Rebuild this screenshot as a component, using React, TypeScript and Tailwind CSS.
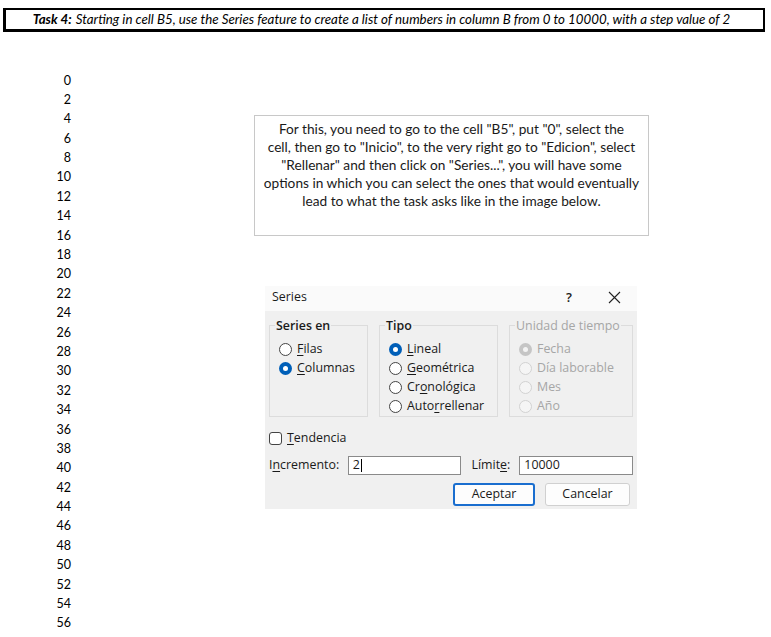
import React from 'react';

const numbers = Array.from({ length: 29 }, (_, i) => i * 2);

const noteLines = [
  'For this, you need to go to the cell "B5", put "0", select the',
  'cell, then go to "Inicio", to the very right go to "Edicion", select',
  '"Rellenar" and then click on "Series...", you will have some',
  'options in which you can select the ones that would eventually',
  'lead to what the task asks like in the image below.',
];

type RadioState = 'on' | 'off' | 'disabled-on' | 'disabled-off';

const Radio = ({ state }: { state: RadioState }) => {
  if (state === 'on') {
    return (
      <span className="w-[13px] h-[13px] rounded-full bg-[#005fb8] flex items-center justify-center shrink-0">
        <span className="w-[5px] h-[5px] rounded-full bg-white" />
      </span>
    );
  }
  if (state === 'disabled-on') {
    return (
      <span className="w-[13px] h-[13px] rounded-full bg-[#c5c5c5] flex items-center justify-center shrink-0">
        <span className="w-[5px] h-[5px] rounded-full bg-[#f3f3f3]" />
      </span>
    );
  }
  if (state === 'disabled-off') {
    return <span className="w-[13px] h-[13px] rounded-full border border-[#d2d2d2] bg-[#f5f5f5] shrink-0" />;
  }
  return <span className="w-[13px] h-[13px] rounded-full border border-[#444] bg-white shrink-0" />;
};

// label with one underlined access key
const Label = ({ pre, key_, post }: { pre?: string; key_: string; post: string }) => (
  <span>
    {pre}
    <span className="underline underline-offset-2">{key_}</span>
    {post}
  </span>
);

const Option = ({ state, children }: { state: RadioState; children: React.ReactNode }) => (
  <div
    className={`flex items-center gap-[5px] h-[19px] ${state.startsWith('disabled') ? 'text-[#a6a6a6]' : 'text-[#1a1a1a]'}`}
  >
    <Radio state={state} />
    {children}
  </div>
);

const Group = ({ title, width, disabled, children }: { title: string; width: string; disabled?: boolean; children: React.ReactNode }) => (
  <fieldset className={`${width} h-[99px] border border-[#dcdcdc] pl-[9px] pr-[4px]`}>
    <legend className={`ml-[-4px] px-[1px] leading-[16px] ${disabled ? 'text-[#a6a6a6]' : 'text-[#1a1a1a] font-semibold'}`}>
      {title}
    </legend>
    <div className="mt-[6px] flex flex-col">{children}</div>
  </fieldset>
);

const SeriesDialog = () => (
  <div className="w-[372px] h-[223px] bg-[#f0f0f0] font-['Open_Sans',sans-serif] text-[12.4px] text-[#1a1a1a]">
    <div className="h-[25px] bg-[#fafafa] flex items-center pl-[7px] pb-[1px]">
      <span className="flex-1">Series</span>
      <span className="text-[13px] font-semibold mr-[36px]">?</span>
      <svg width="13" height="13" viewBox="0 0 13 13" className="mr-[16px]">
        <path d="M1 1 L12 12 M12 1 L1 12" stroke="#222" strokeWidth="1.1" />
      </svg>
    </div>
    <div className="px-[4px] pt-[7px]">
      <div className="flex gap-[11px]">
        <Group title="Series en" width="w-[99px]">
          <Option state="off"><Label key_="F" post="ilas" /></Option>
          <Option state="on"><Label key_="C" post="olumnas" /></Option>
        </Group>
        <Group title="Tipo" width="w-[119px]">
          <Option state="on"><Label key_="L" post="ineal" /></Option>
          <Option state="off"><Label key_="G" post="eométrica" /></Option>
          <Option state="off"><Label pre="Cr" key_="o" post="nológica" /></Option>
          <Option state="off"><Label pre="Auto" key_="r" post="rellenar" /></Option>
        </Group>
        <Group title="Unidad de tiempo" width="w-[124px]" disabled>
          <Option state="disabled-on">Fecha</Option>
          <Option state="disabled-off">Día laborable</Option>
          <Option state="disabled-off">Mes</Option>
          <Option state="disabled-off">Año</Option>
        </Group>
      </div>
      <div className="flex items-center gap-[5px] h-[19px] mt-[12px]">
        <span className="w-[13px] h-[13px] rounded-[3px] border border-[#444] bg-white" />
        <Label key_="T" post="endencia" />
      </div>
      <div className="flex items-center h-[19px] mt-[8px]">
        <span className="w-[79px]"><Label pre="I" key_="n" post="cremento:" /></span>
        <div className="w-[114px] h-[19px] bg-white border border-[#8a8a8a] flex items-center pl-[4px]">
          2<span className="w-px h-[13px] bg-black ml-px" />
        </div>
        <span className="w-[58px] pl-[10px]"><Label pre="Límit" key_="e" post=":" /></span>
        <div className="w-[114px] h-[19px] bg-white border border-[#8a8a8a] flex items-center pl-[4px]">10000</div>
      </div>
      <div className="flex justify-end gap-[10px] mt-[8px] pr-[3px]">
        <button className="w-[82px] h-[23px] rounded-[3px] border-2 border-[#1a6ecf] bg-[#fdfdfd]">Aceptar</button>
        <button className="w-[85px] h-[23px] rounded-[3px] border border-[#d0d0d0] bg-[#fdfdfd]">Cancelar</button>
      </div>
    </div>
  </div>
);

export default function App() {
  return (
    <div className="w-[771px] h-[637px] overflow-hidden bg-white font-['Lato',sans-serif]">
      <div className="mx-[3px] mt-[8px] w-[762px] h-[24px] border-2 border-l-[3px] border-b-[3px] border-black flex items-center justify-center pr-[6px] text-[13.3px] italic text-black">
        <span className="font-bold mr-[4px]">Task 4:</span>
        Starting in cell B5, use the Series feature to create a list of numbers in column B from 0 to 10000, with a step value of 2
      </div>
      <div className="flex">
        <div className="w-[71px] mt-[38.5px] text-right text-[12.5px] text-black">
          {numbers.map((n) => (
            <div key={n} className="h-[19.4px] leading-[19.4px]">{n}</div>
          ))}
        </div>
        <div className="ml-[183px] flex flex-col">
          <div className="mt-[82.5px] w-[395px] h-[121px] border border-[#c8c8c8] pt-[4px] text-center text-[13.7px] leading-[18px] text-[#1a1a1a]">
            {noteLines.map((line) => (
              <div key={line} className="whitespace-nowrap">{line}</div>
            ))}
          </div>
          <div className="mt-[50px] ml-[11px]">
            <SeriesDialog />
          </div>
        </div>
      </div>
    </div>
  );
}
